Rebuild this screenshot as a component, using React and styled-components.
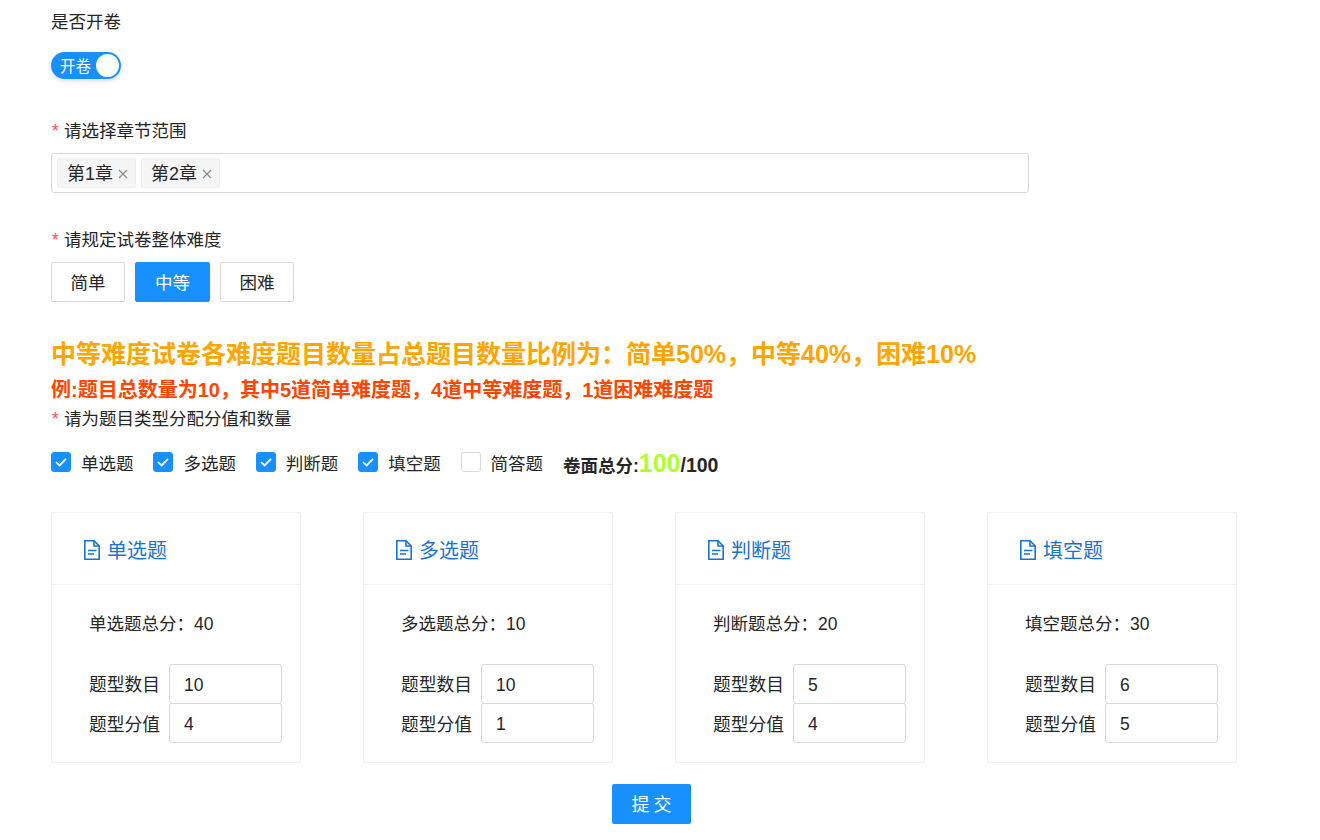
import React from 'react';
import styled, { createGlobalStyle } from 'styled-components';

const GlobalStyle = createGlobalStyle`
  html, body {
    margin: 0;
    padding: 0;
    background: #fff;
    overflow: hidden;
    font-family: "Liberation Sans", "Noto Sans CJK SC", sans-serif;
    color: #262626;
  }
  * { box-sizing: border-box; }
`;

const Page = styled.div`
  width: 1320px;
  height: 840px;
  padding: 9px 0 0 51px;
  overflow: hidden;
`;

const Label = styled.div`
  font-size: 17.5px;
  line-height: 26px;
  color: #262626;
  margin-top: ${({ $top }) => $top || 0}px;
`;

const Star = styled.span`
  font-family: "Liberation Mono", monospace;
  line-height: 0;
  color: #ff4d4f;
  margin: 0 3.5px 0 -1px;
`;

const SwitchRow = styled.div`
  margin-top: 16px;
  height: 28px;
  display: flex;
  align-items: center;
`;

const Switch = styled.div`
  width: 70px;
  height: 27px;
  border-radius: 14px;
  background: #1890ff;
  display: flex;
  align-items: center;
  justify-content: space-between;
  padding: 0 2px 0 9px;
  color: #fff;
  font-size: 15.5px;
  box-shadow: 0 2px 4px rgba(0, 35, 11, 0.15);
`;

const Knob = styled.span`
  width: 23px;
  height: 23px;
  border-radius: 50%;
  background: #fff;
`;

const SelectBox = styled.div`
  margin-top: 9px;
  width: 978px;
  height: 40px;
  border: 1px solid #d9d9d9;
  border-radius: 3px;
  display: flex;
  align-items: center;
  gap: 5px;
  padding-left: 5px;
`;

const Tag = styled.span`
  height: 30px;
  padding: 0 7px 2px 9px;
  background: #f5f5f5;
  border: 1px solid #f0f0f0;
  border-radius: 2px;
  display: flex;
  align-items: center;
  gap: 5px;
  font-size: 18px;
  color: #262626;
`;

const TagClose = styled.svg`
  width: 10px;
  height: 10px;
  stroke: #8c8c8c;
  stroke-width: 1.2;
  margin-top: 3px;
`;

const ButtonRow = styled.div`
  margin-top: 9px;
  display: flex;
  gap: 10px;
`;

const LevelButton = styled.div`
  width: ${({ $w }) => $w || 74}px;
  height: 40px;
  padding-bottom: 2px;
  border: 1px solid ${({ $active }) => ($active ? '#1890ff' : '#d9d9d9')};
  background: ${({ $active }) => ($active ? '#1890ff' : '#fff')};
  color: ${({ $active }) => ($active ? '#fff' : '#262626')};
  border-radius: 2px;
  display: flex;
  align-items: center;
  justify-content: center;
  font-size: 17.5px;
`;

const Headline = styled.div`
  margin-top: 35px;
  font-size: 25px;
  line-height: 34px;
  font-weight: 700;
  color: #ffa500;
`;

const SubHeadline = styled.div`
  margin-top: 3px;
  font-size: 20px;
  line-height: 32px;
  font-weight: 700;
  color: #ff4500;
`;

const CheckRow = styled.div`
  margin-top: 15px;
  display: flex;
  align-items: center;
  height: 30px;
`;

const CheckItem = styled.label`
  display: flex;
  align-items: center;
  gap: 10px;
  margin-right: 19.9px;
  font-size: 17.5px;
  color: #262626;
`;

const CheckBox = styled.span`
  width: 20px;
  height: 20px;
  border-radius: 3px;
  background: ${({ $on }) => ($on ? '#1890ff' : '#fff')};
  border: 1px solid ${({ $on }) => ($on ? '#1890ff' : '#d9d9d9')};
  display: flex;
  align-items: center;
  justify-content: center;
`;

const Total = styled.div`
  padding-top: 3px;
  font-size: 17.5px;
  font-weight: 700;
  color: #262626;
  display: flex;
  align-items: baseline;
`;

const TotalValue = styled.span`
  font-size: 25px;
  color: #adff2f;
`;

const TotalMax = styled.span`
  font-size: 19.5px;
`;

const CardRow = styled.div`
  margin-top: 35px;
  display: flex;
  gap: 62px;
`;

const Card = styled.div`
  width: 250px;
  height: 251px;
  border: 1px solid #f0f0f0;
  border-radius: 2px;
`;

const CardHead = styled.div`
  height: 72px;
  border-bottom: 1px solid #f0f0f0;
  padding: 2px 0 0 32px;
  display: flex;
  align-items: center;
  gap: 7px;
  color: #1874d2;
  font-size: 20px;
`;

const CardBody = styled.div`
  padding: 25px 18px 0 37px;
`;

const ScoreLine = styled.div`
  font-size: 17.5px;
  line-height: 28px;
  color: #262626;
  margin-bottom: 26px;
`;

const FieldRow = styled.div`
  display: flex;
  align-items: center;
  gap: 9px;
  font-size: 17.75px;
  color: #262626;
  margin-top: ${({ $tight }) => ($tight ? '-1px' : '0')};
`;

const FieldLabel = styled.span`
  width: 71px;
  white-space: nowrap;
  margin-bottom: ${({ $low }) => ($low ? '0' : '2px')};
`;

const FieldInput = styled.div`
  width: 113px;
  height: 40px;
  border: 1px solid #d9d9d9;
  border-radius: 3px;
  padding: 2px 0 0 14px;
  display: flex;
  align-items: center;
  font-size: 17.5px;
  color: #262626;
`;

const SubmitRow = styled.div`
  margin-top: 21px;
  width: 1201px;
  display: flex;
  justify-content: center;
`;

const Submit = styled.div`
  width: 79px;
  height: 40px;
  padding-bottom: 2px;
  background: #1890ff;
  color: #fff;
  border-radius: 2px;
  display: flex;
  align-items: center;
  justify-content: center;
  font-size: 18px;
  letter-spacing: 4px;
  text-indent: 4px;
`;

const Check = () => (
  <svg width="14" height="14" viewBox="0 0 14 14" fill="none" stroke="#fff" strokeWidth="1.8">
    <path d="M2 7.2 L5.6 10.4 L12 3.8" />
  </svg>
);

const FileIcon = () => (
  <svg width="16" height="20" viewBox="0 0 16 20" fill="none" stroke="#1874d2" strokeWidth="1.6">
    <path d="M0.8 0.8 H10 L15.2 6 V19.2 H0.8 Z" />
    <path d="M10 0.8 V6 H15.2" />
    <path d="M4 10.5 H12.5 M4 14 H10" />
  </svg>
);

const Close = () => (
  <TagClose viewBox="0 0 10 10">
    <path d="M1 1 L9 9 M9 1 L1 9" />
  </TagClose>
);

const cards = [
  { name: '单选题', total: 40, count: 10, score: 4 },
  { name: '多选题', total: 10, count: 10, score: 1 },
  { name: '判断题', total: 20, count: 5, score: 4 },
  { name: '填空题', total: 30, count: 6, score: 5 },
];

const types = [
  { name: '单选题', on: true },
  { name: '多选题', on: true },
  { name: '判断题', on: true },
  { name: '填空题', on: true },
  { name: '简答题', on: false },
];

export default function App() {
  return (
    <Page>
      <GlobalStyle />
      <Label>是否开卷</Label>
      <SwitchRow>
        <Switch>
          开卷
          <Knob />
        </Switch>
      </SwitchRow>

      <Label $top={39}>
        <Star>*</Star>请选择章节范围
      </Label>
      <SelectBox>
        <Tag>第1章<Close /></Tag>
        <Tag>第2章<Close /></Tag>
      </SelectBox>

      <Label $top={34}>
        <Star>*</Star>请规定试卷整体难度
      </Label>
      <ButtonRow>
        <LevelButton>简单</LevelButton>
        <LevelButton $active $w={75}>中等</LevelButton>
        <LevelButton>困难</LevelButton>
      </ButtonRow>

      <Headline>中等难度试卷各难度题目数量占总题目数量比例为：简单50%，中等40%，困难10%</Headline>
      <SubHeadline>例:题目总数量为10，其中5道简单难度题，4道中等难度题，1道困难难度题</SubHeadline>
      <Label>
        <Star>*</Star>请为题目类型分配分值和数量
      </Label>

      <CheckRow>
        {types.map((t) => (
          <CheckItem key={t.name}>
            <CheckBox $on={t.on}>{t.on && <Check />}</CheckBox>
            {t.name}
          </CheckItem>
        ))}
        <Total>
          卷面总分:<TotalValue>100</TotalValue><TotalMax>/100</TotalMax>
        </Total>
      </CheckRow>

      <CardRow>
        {cards.map((c) => (
          <Card key={c.name}>
            <CardHead>
              <FileIcon />
              {c.name}
            </CardHead>
            <CardBody>
              <ScoreLine>{c.name}总分：{c.total}</ScoreLine>
              <FieldRow>
                <FieldLabel>题型数目</FieldLabel>
                <FieldInput>{c.count}</FieldInput>
              </FieldRow>
              <FieldRow $tight>
                <FieldLabel $low>题型分值</FieldLabel>
                <FieldInput>{c.score}</FieldInput>
              </FieldRow>
            </CardBody>
          </Card>
        ))}
      </CardRow>

      <SubmitRow>
        <Submit>提交</Submit>
      </SubmitRow>
    </Page>
  );
}
